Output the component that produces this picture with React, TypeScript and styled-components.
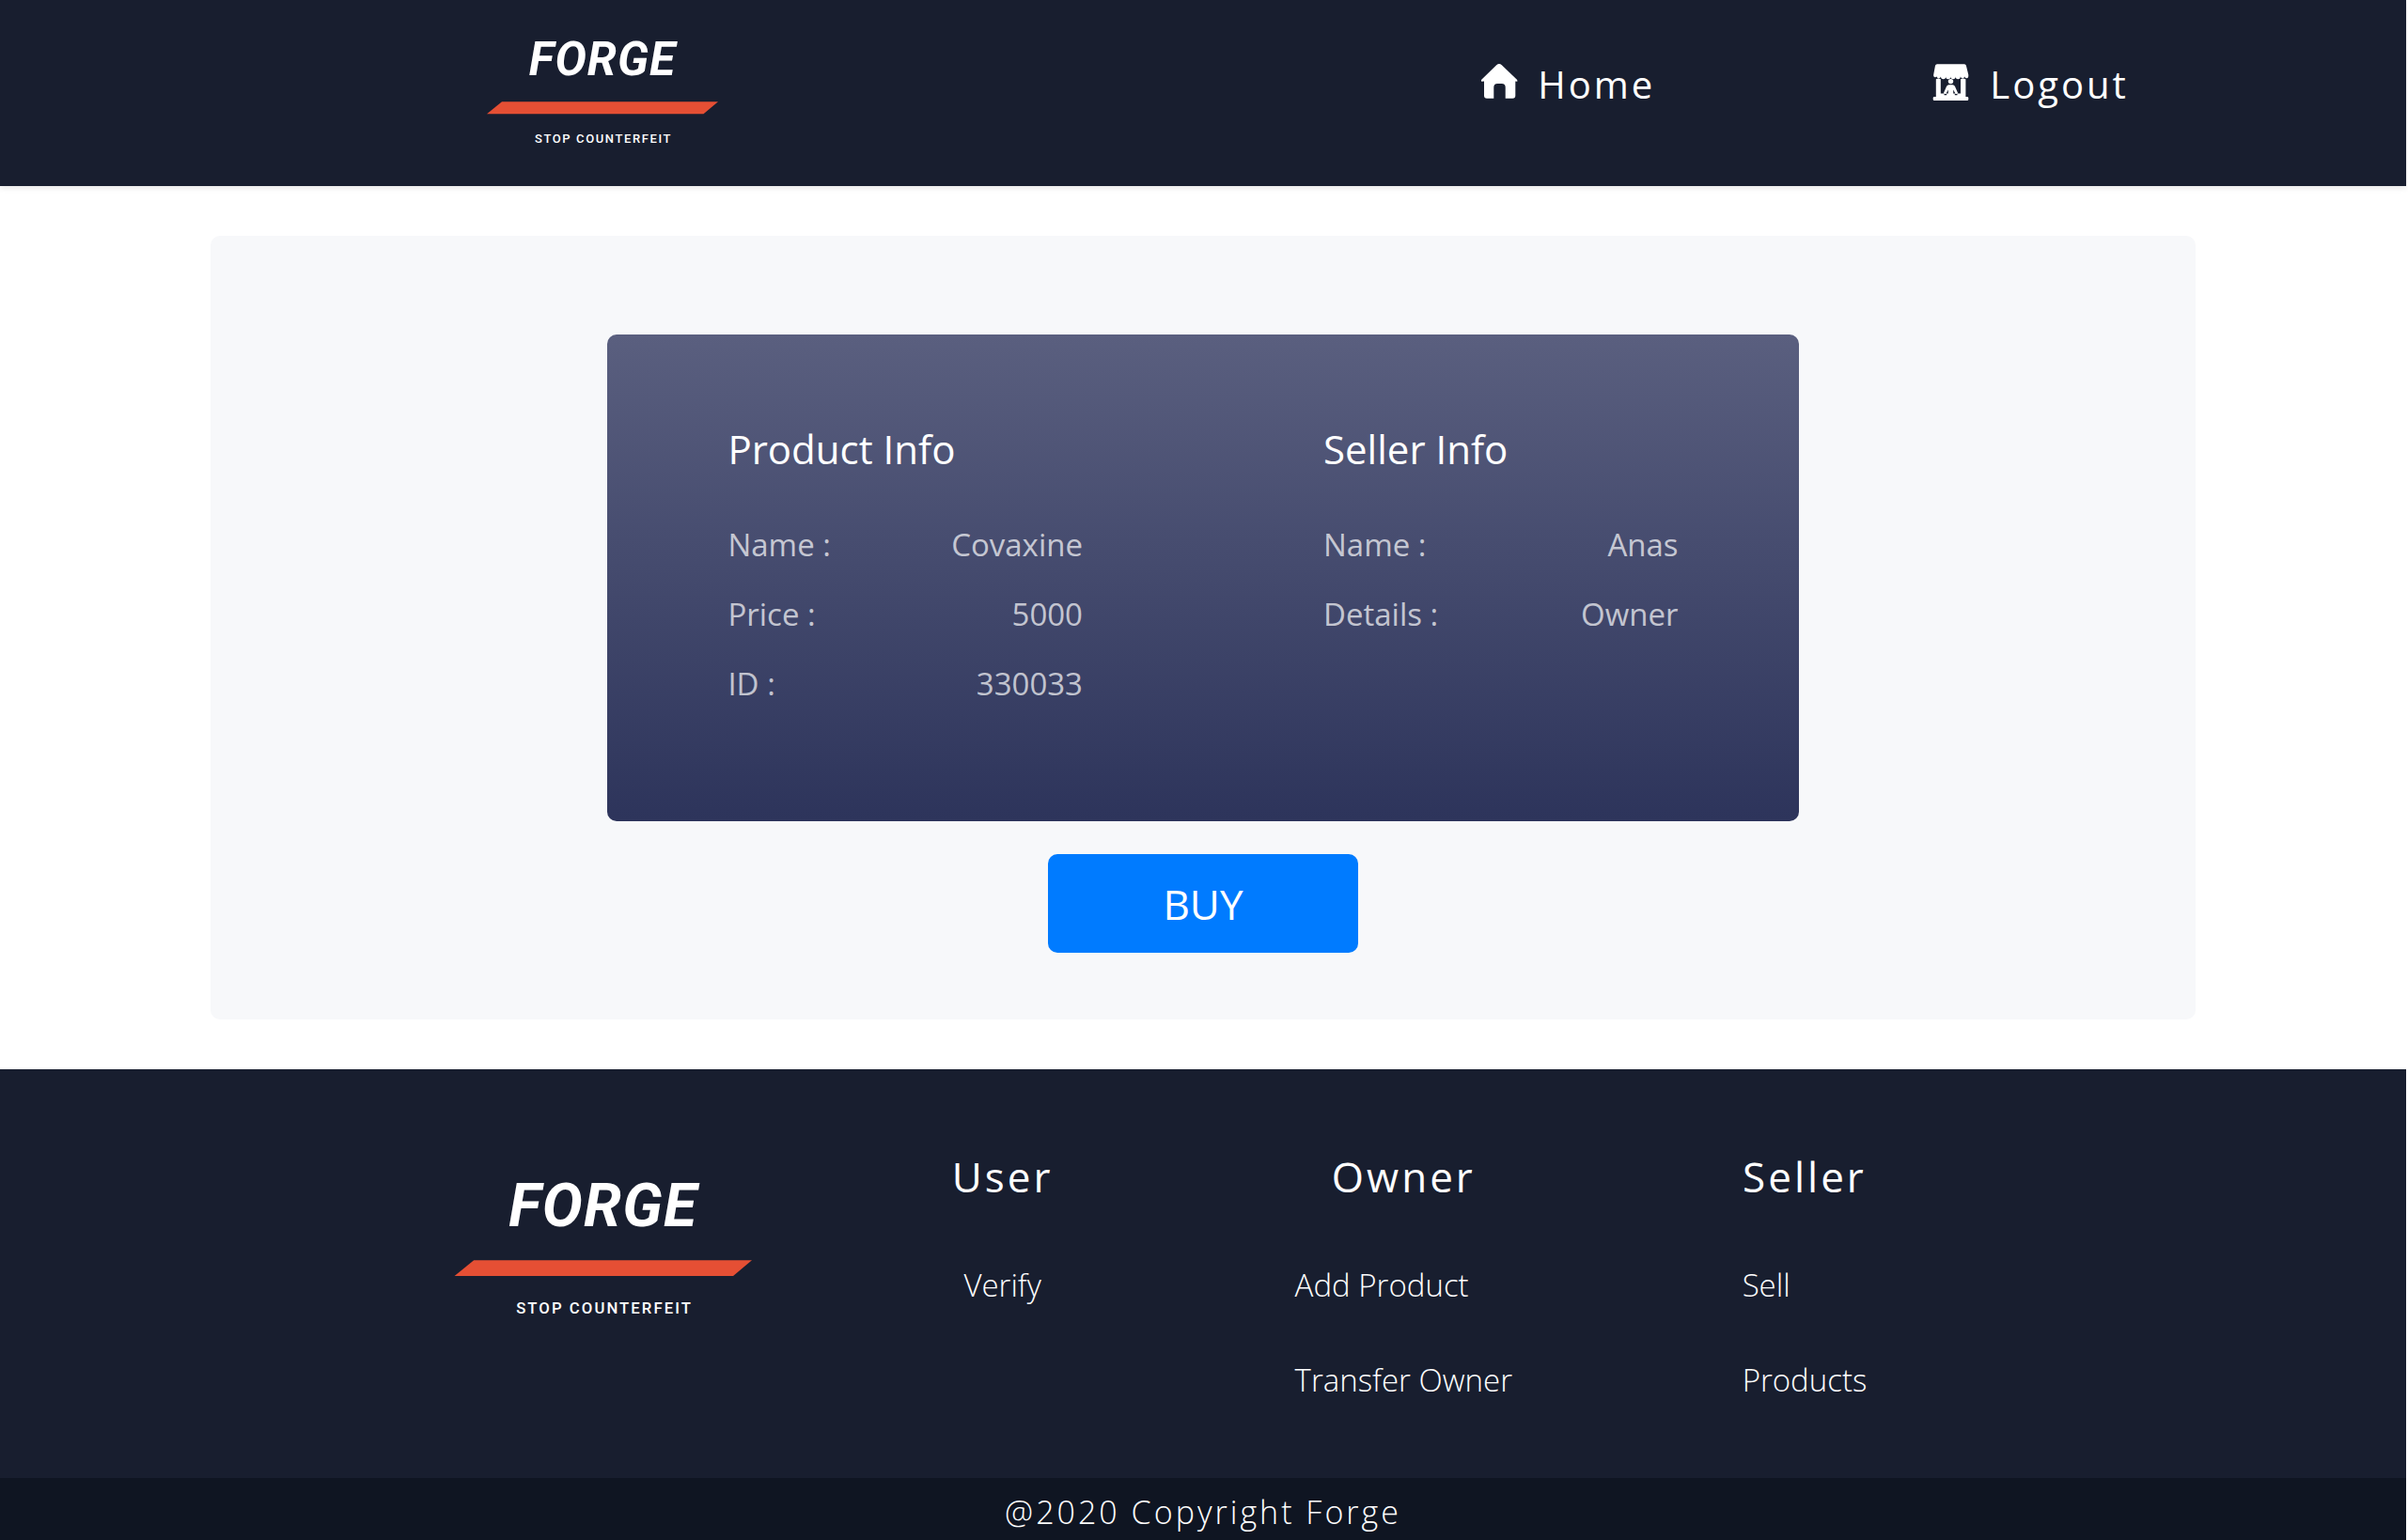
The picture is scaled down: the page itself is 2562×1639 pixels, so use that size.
import React from "react";
import styled, { createGlobalStyle } from "styled-components";

const Global = createGlobalStyle`
  * { box-sizing: border-box; }
  html { background: #fff; }
  body { margin: 0; font-family: "Open Sans", "Noto Sans", sans-serif; color: #fff; }
  a { color: inherit; text-decoration: none; }
  h2, p, ul, dl, dd { margin: 0; padding: 0; }
  ul { list-style: none; }
`;

const Page = styled.div`
  display: flex;
  flex-direction: column;
  min-height: 100vh;
  padding-right: 2px;
`;

const Header = styled.header`
  display: grid;
  grid-template-columns: 1fr 1fr;
  background: #181e2f;
  box-shadow: 0 2px 6px rgba(0, 0, 0, 0.1);
`;

const HomeLink = styled.a`
  display: block;
  justify-self: center;
`;

const Nav = styled.nav`
  display: flex;
  justify-content: space-evenly;
  align-items: flex-start;
  padding-top: 60px;
`;

const NavLink = styled.a`
  display: flex;
  align-items: center;
  gap: 21px;
  font-size: 40px;
  line-height: 60px;
  letter-spacing: 3px;
`;

const NavIcon = styled.svg`
  width: 40px;
  height: 40px;
  margin-bottom: 6px;
  fill: #fff;
`;

const Main = styled.main`
  flex: 1;
  display: flex;
  flex-direction: column;
  align-items: center;
  width: 2112px;
  max-width: 100%;
  margin: 53px auto;
  padding: 105px 0 70px;
  background: #f7f8fa;
  border-radius: 10px;
`;

const Card = styled.section`
  display: grid;
  grid-template-columns: 1fr 1fr;
  width: 60%;
  padding: 90px 0 122px;
  background: linear-gradient(#5a5f7f, #2d345b);
  border-radius: 10px;
`;

const Info = styled.div`
  padding: 0 128px;
`;

const InfoTitle = styled.h2`
  font-size: 42px;
  font-weight: 400;
  line-height: 64px;
`;

const InfoList = styled.dl`
  display: grid;
  gap: 26px;
  margin-top: 46px;
`;

const InfoRow = styled.div`
  display: flex;
  justify-content: space-between;
  font-size: 33px;
  line-height: 48px;
  color: rgba(255, 255, 255, 0.7);
`;

const Buy = styled.button`
  width: 330px;
  height: 105px;
  margin-top: 35px;
  border: 0;
  border-radius: 10px;
  background: #007bff;
  color: #fff;
  font: 400 44px/64px "Open Sans", "Noto Sans", sans-serif;
`;

const Footer = styled.footer`
  background: #181e2f;
`;

const FooterGrid = styled.div`
  display: grid;
  grid-template-columns: repeat(4, 1fr);
  width: calc(100% * 2 / 3);
  margin: 0 auto;
`;

const FooterBrand = styled.div`
  display: flex;
  justify-content: center;
  align-items: flex-start;
  padding-top: 64px;
`;

const FooterColumn = styled.section`
  display: flex;
  flex-direction: column;
  align-items: center;
  padding: 82px 0 80px;
`;

const FooterTitle = styled.h2`
  font-size: 44px;
  font-weight: 400;
  line-height: 64px;
  letter-spacing: 3px;
`;

const Links = styled.ul`
  display: grid;
  gap: 53px;
  margin-top: 60px;
  font-size: 33px;
  font-weight: 300;
  line-height: 48px;
`;

const Copyright = styled.p`
  padding: 12px 0 6px;
  background: #0f1522;
  font-size: 34px;
  font-weight: 300;
  line-height: 48px;
  letter-spacing: 3px;
  text-align: center;
`;

const LogoSvg = styled.svg`
  display: block;
  font-family: Roboto, "Open Sans", sans-serif;
  font-weight: 700;
  fill: #fff;
`;

function Logo({ width }: { width: number }) {
  return (
    <LogoSvg width={width} viewBox="0 0 248 198" role="img" aria-label="Forge, stop counterfeit">
      <text x="125" y="80" fontSize="50" fontStyle="italic" letterSpacing="1" textAnchor="middle">FORGE</text>
      <path d="M18 108.300H248L232.500 121.300H2Z" fill="#e54f34" />
      <text x="126" y="152" fontSize="13" fontWeight="500" letterSpacing="1.600" textAnchor="middle">STOP COUNTERFEIT</text>
    </LogoSvg>
  );
}

function HouseIcon() {
  return (
    <NavIcon viewBox="0 0 40 40" aria-hidden="true">
      <path d="M17.200 2.200Q20-.2 22.800 2.200L38.700 17.400Q39.800 18.600 39.200 19.800L37.300 19.600V34.700a3 3 0 0 1-3 3H26.700V26a4 4 0 0 0-4-4H18.300a4 4 0 0 0-4 4V37.700H7a3 3 0 0 1-3-3V19.600L1.300 19.800Q.4 18.600 1.500 17.400Z" />
    </NavIcon>
  );
}

function StallIcon() {
  return (
    <NavIcon viewBox="0 0 40 40" aria-hidden="true">
      <path d="M5 1.300H34Q35.500 1.300 35.900 2.800L38.300 12.500V14a2 2 0 0 1-4 .6a2.300 2.300 0 0 1-4.500 0a2.600 2.600 0 0 1-5.200 0a2.600 2.600 0 0 1-5.200 0a2.600 2.600 0 0 1-5.200 0a2.600 2.600 0 0 1-5.200 0a2.300 2.300 0 0 1-4.500 0a2 2 0 0 1-3.300-.6V12.500L3 2.800Q3.500 1.300 5 1.300Z" />
      <path d="M3.800 17.200Q6.300 15.600 8.800 17.200V32.500H30V17.200Q32.700 15.600 35.400 17.200V36H37Q38.300 36 38.300 37.300V38.700Q38.300 40 37 40H2Q.7 40 .7 38.700V37.300Q.7 36 2 36H3.800Z" />
      <circle cx="19.500" cy="19.600" r="2.700" />
      <path d="M17.500 23.300H21.500Q23.200 23.300 24 25L27.200 32.300L24.800 33.300L22.200 28.500V33H16.800V28.500L14.200 33.300L11.800 32.300L15 25Q15.800 23.300 17.500 23.300Z" />
      <path d="M12.500 33.600H15.200M23.800 33.600H26.500" stroke="#181e2f" strokeWidth="1.300" />
    </NavIcon>
  );
}

const productInfo = [["Name :", "Covaxine"], ["Price :", "5000"], ["ID :", "330033"]];
const sellerInfo = [["Name :", "Anas"], ["Details :", "Owner"]];

function InfoBlock({ title, rows }: { title: string; rows: string[][] }) {
  return (
    <Info>
      <InfoTitle>{title}</InfoTitle>
      <InfoList>
        {rows.map(([label, value]) => (
          <InfoRow key={label}><dt>{label}</dt><dd>{value}</dd></InfoRow>
        ))}
      </InfoList>
    </Info>
  );
}

function LinkColumn({ title, links }: { title: string; links: string[] }) {
  return (
    <FooterColumn>
      <FooterTitle>{title}</FooterTitle>
      <Links>{links.map((l) => <li key={l}><a href="#">{l}</a></li>)}</Links>
    </FooterColumn>
  );
}

export default function App() {
  return (
    <Page>
      <Global />
      <Header>
        <HomeLink href="#"><Logo width={248} /></HomeLink>
        <Nav>
          <NavLink href="#"><HouseIcon />Home</NavLink>
          <NavLink href="#"><StallIcon />Logout</NavLink>
        </Nav>
      </Header>
      <Main>
        <Card>
          <InfoBlock title="Product Info" rows={productInfo} />
          <InfoBlock title="Seller Info" rows={sellerInfo} />
        </Card>
        <Buy type="button">BUY</Buy>
      </Main>
      <Footer>
        <FooterGrid>
          <FooterBrand><Logo width={319} /></FooterBrand>
          <LinkColumn title="User" links={["Verify"]} />
          <LinkColumn title="Owner" links={["Add Product", "Transfer Owner"]} />
          <LinkColumn title="Seller" links={["Sell", "Products"]} />
        </FooterGrid>
        <Copyright>@2020 Copyright Forge</Copyright>
      </Footer>
    </Page>
  );
}
